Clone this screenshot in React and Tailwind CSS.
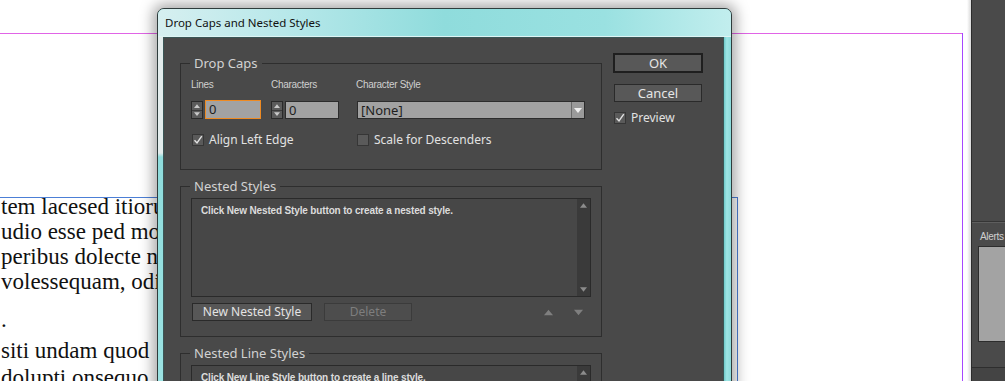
import React from 'react';

// small triangle used for spinners, scrollbars and reorder arrows
function Tri({ dir = 'up', w = 8, h = 5, className = '' }) {
    return (
        <svg width={w} height={h} viewBox="0 0 8 5" className={className}>
            <path d={dir === 'up' ? 'M4 0L8 5H0Z' : 'M0 0H8L4 5Z'} fill="currentColor" />
        </svg>
    );
}

function Spinner() {
    return (
        <div className="w-[12px] h-[18px] flex flex-col border border-[#2a2a2a] bg-[#5b5b5b]">
            <div className="flex-1 flex items-center justify-center border-b border-[#3a3a3a] text-[#c8c8c8]">
                <Tri dir="up" w={6} h={4} />
            </div>
            <div className="flex-1 flex items-center justify-center text-[#c8c8c8]">
                <Tri dir="down" w={6} h={4} />
            </div>
        </div>
    );
}

function Check({ checked }) {
    return (
        <div className="w-[12px] h-[12px] shrink-0 border border-[#363636] bg-[#5a5a5a] flex items-center justify-center">
            {checked && (
                <svg width="10" height="10" viewBox="0 0 10 10">
                    <path d="M1.5 5.2L4 8L8.8 1.2" stroke="#e2e2e2" strokeWidth="1.4" fill="none" />
                </svg>
            )}
        </div>
    );
}

function Group({ title, className = '', children }) {
    return (
        <div className={`relative border border-[#2e2e2e] ${className}`}>
            <span className="absolute -top-[9px] left-[9px] px-[4px] bg-[#494949] text-[13px] leading-[16px] text-[#d2d2d2]">
                {title}
            </span>
            {children}
        </div>
    );
}

function ListBox({ text, className = '' }) {
    return (
        <div className={`w-[400px] flex border border-[#2a2a2a] bg-[#474747] ${className}`}>
            <div className="flex-1 pt-[5px] pl-[9px] font-['Liberation_Sans',sans-serif] font-bold text-[10px] leading-[14px] tracking-[-0.15px] text-[#dcdcdc]">
                {text}
            </div>
            <div className="w-[13px] bg-[#3a3a3a] flex flex-col items-center justify-between py-[4px] text-[#8c8c8c]">
                <Tri dir="up" w={7} h={5} />
                <Tri dir="down" w={7} h={5} />
            </div>
        </div>
    );
}

export default function App() {
    const labelCls = "font-['Liberation_Sans',sans-serif] text-[10px] leading-[12px] tracking-[-0.3px] text-[#cfcfcf]";

    return (
        <div className="w-[1005px] h-[381px] relative overflow-hidden bg-white flex font-['Noto_Sans',sans-serif]">
            {/* page canvas */}
            <div className="flex-1 relative">
                <div className="absolute top-[33px] left-0 w-[963px] h-px bg-[#e064e6]" />
                <div className="absolute top-[33px] left-[962px] bottom-0 w-px bg-[#a646ff]" />
                <div className="absolute right-0 top-0 bottom-0 w-[4px] bg-gradient-to-r from-white to-[#d9d9d9]" />

                {/* text frame */}
                <div className="absolute left-0 top-[197px] w-[738px] h-[200px] border-t border-r border-[#4c7fd6]">
                    <div className="w-[158px] overflow-hidden -mt-[4px] pl-px font-['Liberation_Serif',serif] text-[23px] text-[#111] whitespace-nowrap">
                        <div className="leading-[25px]">tem lacesed itiorum</div>
                        <div className="leading-[25px]">udio esse ped mo</div>
                        <div className="leading-[25px]">peribus dolecte ni</div>
                        <div className="leading-[25px]">volessequam, odis</div>
                        <div className="leading-[25px] mt-[13px]">.</div>
                        <div className="leading-[27px] mt-[5px]">siti undam quod</div>
                        <div className="leading-[27px]">dolupti onsequo</div>
                    </div>
                </div>

                {/* dialog window */}
                <div className="absolute left-[157px] top-[8px] w-[575px] h-[400px] flex flex-col border border-[#2f3c3c] rounded-t-[7px] bg-[#93dede] shadow-[0_0_14px_4px_rgba(0,0,0,0.35)]">
                    <div className="h-[28px] shrink-0 flex items-center pl-[7px] rounded-t-[6px] bg-[linear-gradient(to_right,#d6eff0_0%,#b8e8ea_22%,#8fdcdc_50%,#9ae1e1_78%,#c2eeee_100%)] border-b border-[#dff4f4]">
                        <span className="text-[11.5px] text-[#111] font-['Noto_Sans',sans-serif]">Drop Caps and Nested Styles</span>
                    </div>
                    <div className="flex-1 flex">
                        <div className="w-[5px] bg-[linear-gradient(to_bottom,#e3ecec_0px,#e3ecec_116px,#8fdcdc_120px,#9fe4e4_100%)]" />
                        <div className="w-[561px] bg-[#494949] border border-[#3a5656] flex pl-[16px]">
                            {/* left column */}
                            <div className="w-[422px] pt-[25px]">
                                <Group title="Drop Caps" className="h-[107px] pt-[15px] pl-[10px]">
                                    <div className="grid grid-cols-[80px_85px_229px]">
                                        <div className={labelCls}>Lines</div>
                                        <div className={labelCls}>Characters</div>
                                        <div className={labelCls}>Character Style</div>
                                        <div className="flex items-center gap-[2px] mt-[10px]">
                                            <Spinner />
                                            <div className="w-[56px] h-[19px] -mt-px border border-[#ee8a22] bg-[#a2a2a2] pl-[3px] text-[13px] leading-[17px] text-[#1e1e1e]">0</div>
                                        </div>
                                        <div className="flex items-center gap-[2px] mt-[10px]">
                                            <Spinner />
                                            <div className="w-[54px] h-[18px] border border-[#2c2c2c] bg-[#a2a2a2] pl-[3px] text-[13px] leading-[16px] text-[#1e1e1e]">0</div>
                                        </div>
                                        <div className="mt-[10px] ml-px h-[18px] flex border border-[#2c2c2c] bg-[#a2a2a2]">
                                            <div className="flex-1 pl-[3px] text-[13px] leading-[16px] text-[#1e1e1e]">[None]</div>
                                            <div className="w-[13px] border-l border-[#6a6a6a] bg-[#9a9a9a] flex items-center justify-center text-[#f0f0f0]">
                                                <Tri dir="down" w={8} h={5} />
                                            </div>
                                        </div>
                                    </div>
                                    <div className="mt-[14px] h-[14px] flex items-center text-[12px] text-[#e2e2e2]">
                                        <div className="w-[165px] flex items-center gap-[5px] pl-px">
                                            <Check checked />
                                            <span>Align Left Edge</span>
                                        </div>
                                        <div className="flex items-center gap-[5px] pl-px">
                                            <Check />
                                            <span>Scale for Descenders</span>
                                        </div>
                                    </div>
                                </Group>

                                <Group title="Nested Styles" className="mt-[16px] h-[151px] pt-[11px] pl-[10px]">
                                    <ListBox text="Click New Nested Style button to create a nested style." className="h-[99px]" />
                                    <div className="w-[400px] mt-[6px] flex items-center">
                                        <div className="w-[120px] h-[18px] ml-px border border-[#2a2a2a] bg-[#575757] text-center text-[12px] leading-[16px] text-[#e4e4e4]">New Nested Style</div>
                                        <div className="w-[88px] h-[18px] ml-[12px] border border-[#3b3b3b] bg-[#4d4d4d] text-center text-[12px] leading-[16px] text-[#7e7e7e]">Delete</div>
                                        <div className="ml-auto mr-[8px] flex items-center gap-[21px] text-[#7f7f7f]">
                                            <Tri dir="up" w={9} h={9} />
                                            <Tri dir="down" w={9} h={9} />
                                        </div>
                                    </div>
                                </Group>

                                <Group title="Nested Line Styles" className="mt-[16px] h-[80px] pt-[11px] pl-[10px]">
                                    <ListBox text="Click New Line Style button to create a line style." className="h-[80px]" />
                                </Group>
                            </div>

                            {/* right column */}
                            <div className="w-[90px] ml-[11px] pt-[15px] flex flex-col">
                                <div className="h-[20px] border-2 border-[#1f1f1f] bg-[#585858] text-center text-[13px] leading-[16px] text-[#e6e6e6]">OK</div>
                                <div className="h-[18px] mt-[11px] mx-px border border-[#2a2a2a] bg-[#585858] text-center text-[13px] leading-[16px] text-[#e6e6e6]">Cancel</div>
                                <div className="mt-[10px] ml-px flex items-center gap-[5px] text-[12px] leading-[12px] text-[#e2e2e2]">
                                    <Check checked />
                                    <span>Preview</span>
                                </div>
                            </div>
                        </div>
                        <div className="flex-1 bg-[linear-gradient(to_right,#6fcaca,#9ee6e6_40%,#8adada)]" />
                    </div>
                </div>
            </div>

            {/* right panel */}
            <div className="w-[34px] shrink-0 flex flex-col bg-[#4a4a4a] border-l border-[#2c2c2c]">
                <div className="h-[222px] shrink-0 border-b border-[#353535]" />
                <div className="border-t border-[#5e5e5e] pt-[8px] pl-[8px] font-['Liberation_Sans',sans-serif] text-[10px] leading-[12px] tracking-[-0.3px] text-[#cfcfcf]">Alerts</div>
                <div className="mt-[3px] ml-[6px] h-[96px] border border-[#2c2c2c] border-r-0 bg-[#a3a3a3]" />
                <div className="mt-[25px] border-t border-[#2e2e2e] flex-1 bg-[#444]" />
            </div>
        </div>
    );
}
